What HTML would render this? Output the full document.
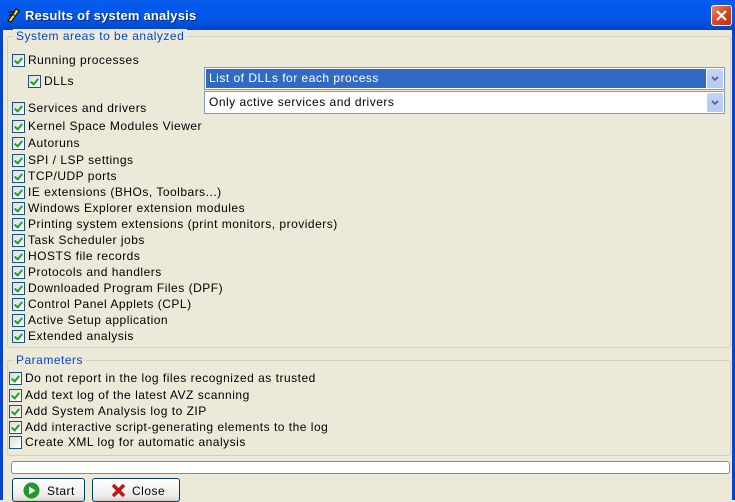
<!DOCTYPE html>
<html><head><style>
*{margin:0;padding:0;box-sizing:border-box}
body{width:735px;height:500px;overflow:hidden;background:#ECE9D8;font-family:"Liberation Sans",sans-serif;font-size:12px;color:#000;position:relative;letter-spacing:0.5px}
.tb{position:absolute;left:0;top:0;width:735px;height:30px;background:linear-gradient(#0A5FE8,#0058EE 20%,#0355E0 70%,#0244C8);color:#fff;font-weight:bold;font-size:13px;letter-spacing:0.2px}
.tb span{position:absolute;left:25px;top:8px;text-shadow:1px 1px #0a2a80}
.lb{position:absolute;left:0;top:30px;width:3px;height:470px;background:#0842d0}
.rb{position:absolute;right:0;top:30px;width:3px;height:470px;background:#0842d0}
.x{position:absolute;left:711px;top:5px;width:21px;height:21px;border:1px solid #fff;border-radius:3px;background:linear-gradient(135deg,#e88a6a,#d24a22 50%,#b83010)}
.gb{position:absolute;border:1px solid #D0D0BF;border-radius:3px}
.gl{position:absolute;color:#0046D5;background:#ECE9D8;padding:0 3px;font-size:12px}
.c{position:absolute;height:14px;white-space:nowrap;line-height:13px}
.c i{position:absolute;left:0;top:0;width:13px;height:13px;border:1px solid #1C5180;background:linear-gradient(135deg,#DCDCD7,#fff)}
.c i.k::after{content:"";position:absolute;left:3px;top:1px;width:3px;height:6px;border:solid #21A121;border-width:0 2px 2px 0;transform:rotate(40deg)}
.c b{font-weight:normal;position:absolute;left:16px;top:0}
.cb{position:absolute;left:204px;width:521px;height:23px;border:1px solid #7F9DB9;background:#fff}
.cb .t{position:absolute;left:1px;top:1px;height:19px;line-height:19px;padding-left:3px}
.cb .d{position:absolute;right:1px;top:1px;width:16px;height:19px;background:linear-gradient(#C6D3F7,#B4C8F5);border-radius:2px}
.btn{position:absolute;top:478px;height:24px;border:1px solid #003C74;border-radius:3px;background:linear-gradient(#fff,#ECEBE6 80%,#D6D0C5)}
</style></head><body>
<div class="tb"><svg style="position:absolute;left:6px;top:7px" width="14" height="16"><path d="M2 14 L10 2 L13 4 L5 15Z" fill="#ffe000" stroke="#000"/><path d="M2 5h7M3 8h6" stroke="#000"/></svg><span>Results of system analysis</span></div>
<div class="x"><svg width="19" height="19"><path d="M5 5L14 14M14 5L5 14" stroke="#fff" stroke-width="2.2"/></svg></div>
<div class="lb"></div><div class="rb"></div>
<div class="gb" style="left:7px;top:36px;width:724px;height:312px"></div>
<div class="gl" style="left:13px;top:29px">System areas to be analyzed</div>
<div class="gb" style="left:7px;top:360px;width:724px;height:96px"></div>
<div class="gl" style="left:13px;top:353px">Parameters</div>

<div class="c" style="left:12px;top:54px"><i class="k"></i><b>Running processes</b></div>
<div class="c" style="left:28px;top:75px"><i class="k"></i><b>DLLs</b></div>
<div class="c" style="left:12px;top:102px"><i class="k"></i><b>Services and drivers</b></div>
<div class="c" style="left:12px;top:120px"><i class="k"></i><b>Kernel Space Modules Viewer</b></div>
<div class="c" style="left:12px;top:137px"><i class="k"></i><b>Autoruns</b></div>
<div class="c" style="left:12px;top:154px"><i class="k"></i><b>SPI / LSP settings</b></div>
<div class="c" style="left:12px;top:170px"><i class="k"></i><b>TCP/UDP ports</b></div>
<div class="c" style="left:12px;top:186px"><i class="k"></i><b>IE extensions (BHOs, Toolbars...)</b></div>
<div class="c" style="left:12px;top:202px"><i class="k"></i><b>Windows Explorer extension modules</b></div>
<div class="c" style="left:12px;top:218px"><i class="k"></i><b>Printing system extensions (print monitors, providers)</b></div>
<div class="c" style="left:12px;top:234px"><i class="k"></i><b>Task Scheduler jobs</b></div>
<div class="c" style="left:12px;top:250px"><i class="k"></i><b>HOSTS file records</b></div>
<div class="c" style="left:12px;top:266px"><i class="k"></i><b>Protocols and handlers</b></div>
<div class="c" style="left:12px;top:282px"><i class="k"></i><b>Downloaded Program Files (DPF)</b></div>
<div class="c" style="left:12px;top:298px"><i class="k"></i><b>Control Panel Applets (CPL)</b></div>
<div class="c" style="left:12px;top:314px"><i class="k"></i><b>Active Setup application</b></div>
<div class="c" style="left:12px;top:330px"><i class="k"></i><b>Extended analysis</b></div>

<div class="c" style="left:9px;top:372px"><i class="k"></i><b>Do not report in the log files recognized as trusted</b></div>
<div class="c" style="left:9px;top:389px"><i class="k"></i><b>Add text log of the latest AVZ scanning</b></div>
<div class="c" style="left:9px;top:405px"><i class="k"></i><b>Add System Analysis log to ZIP</b></div>
<div class="c" style="left:9px;top:421px"><i class="k"></i><b>Add interactive script-generating elements to the log</b></div>
<div class="c" style="left:9px;top:436px"><i></i><b>Create XML log for automatic analysis</b></div>

<div class="cb" style="top:67px"><div class="t" style="background:#316AC5;color:#fff;width:500px">List of DLLs for each process</div><div class="d"><svg width="16" height="19"><path d="M5 8l3 3 3-3" stroke="#4D6185" stroke-width="1.6" fill="none"/></svg></div></div>
<div class="cb" style="top:91px"><div class="t">Only active services and drivers</div><div class="d"><svg width="16" height="19"><path d="M5 8l3 3 3-3" stroke="#4D6185" stroke-width="1.6" fill="none"/></svg></div></div>

<div style="position:absolute;left:11px;top:461px;width:719px;height:13px;border:1px solid #7F8B9C;border-radius:3px;background:#fff"></div>
<div class="btn" style="left:12px;width:73px"><svg style="position:absolute;left:10px;top:3px" width="17" height="17"><circle cx="8.5" cy="8.5" r="8" fill="#1f9a2a"/><path d="M6 4.5v8l6.5-4z" fill="#fff"/></svg><span style="position:absolute;left:34px;top:5px">Start</span></div>
<div class="btn" style="left:92px;width:88px"><svg style="position:absolute;left:18px;top:4px" width="15" height="15"><path d="M2 2L13 13M13 2L2 13" stroke="#b81818" stroke-width="3.5"/></svg><span style="position:absolute;left:39px;top:5px">Close</span></div>
</body></html>
